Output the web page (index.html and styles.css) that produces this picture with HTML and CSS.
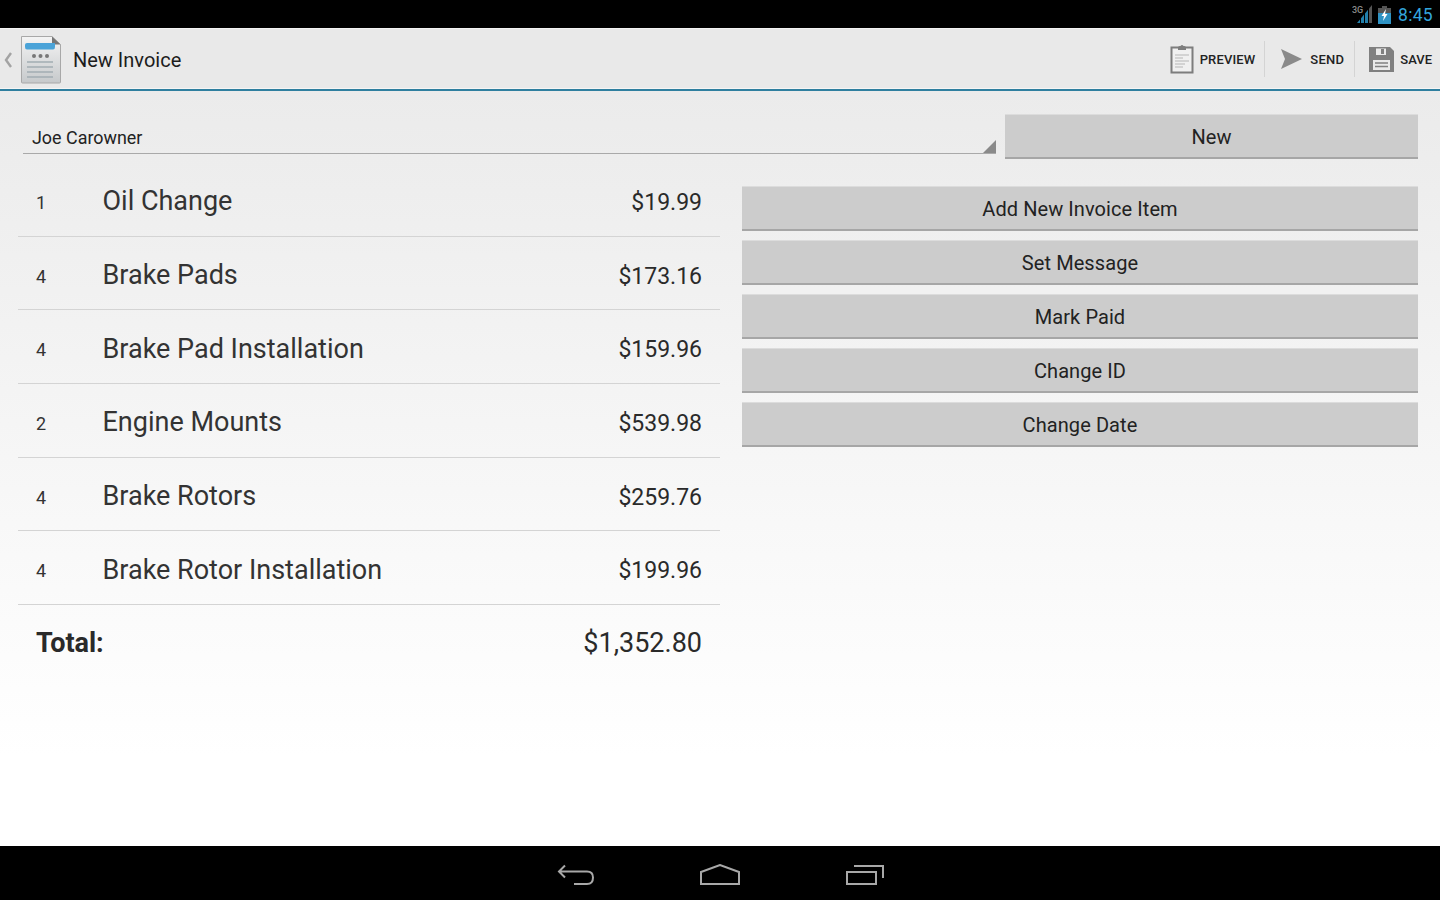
FILE: index.html
```html
<!DOCTYPE html>
<html lang="en">

<head>
  <meta charset="UTF-8">
  <title>New Invoice</title>
  <link rel="stylesheet" href="styles.css">
</head>

<body>

  <!-- Status bar -->
  <div class="statusbar">
    <svg class="status-signal" width="22" height="20" viewBox="0 0 22 20">
      <text x="0" y="9" class="status-3g">3G</text>
      <path d="M5 19 L8 15.400 V19 Z M9 19 V14.200 L12 10.600 V19 Z M13 19 V9.400 L16 5.800 V19 Z" fill="#2380ab"/>
      <path d="M17 19 V4.600 L20 1 V19 Z" fill="#555"/>
    </svg>
    <svg class="status-battery" width="13" height="18" viewBox="0 0 13 18">
      <rect x="4" y="0" width="5" height="2" fill="#555"/>
      <rect x="0" y="2" width="13" height="5" fill="#555"/>
      <rect x="0" y="7" width="13" height="11" fill="#2f93c4"/>
      <path d="M8 3 L3.500 10 H6 L5 15 L9.500 8 H7 Z" fill="#fff"/>
    </svg>
    <span class="clock">8:45</span>
  </div>

  <!-- Action bar -->
  <div class="actionbar">
    <svg class="back-caret" width="8" height="16" viewBox="0 0 8 16">
      <path d="M7 1 L2 8 L7 15" fill="none" stroke="#a3a3a3" stroke-width="2.400"/>
    </svg>
    <svg class="app-icon" width="42" height="48" viewBox="0 0 42 48">
      <defs>
        <linearGradient id="sheet" x1="0" y1="0" x2="0" y2="1">
          <stop offset="0" stop-color="#f4f4f4"/>
          <stop offset="1" stop-color="#c6c9cb"/>
        </linearGradient>
      </defs>
      <path d="M1.500 0.500 H32 L40.500 8.500 V46 Q40.500 47 39.500 47 H2.500 Q1.500 47 1.500 46 Z" fill="url(#sheet)" stroke="#a8a8a8"/>
      <path d="M32 0.500 L40.500 8.500 H32 Z" fill="#777"/>
      <path d="M5 9 Q5 7 7 7 H35 V11 Q35 13.500 33 13.500 H7 Q5 13.500 5 11 Z" fill="#4aa3d8"/>
      <rect x="12" y="18" width="4" height="4" rx="2" fill="#777"/>
      <rect x="18.500" y="18" width="4" height="4" rx="2" fill="#777"/>
      <rect x="25" y="18" width="4" height="4" rx="2" fill="#777"/>
      <path d="M7 26 H33 M7 31 H33 M7 36 H33 M7 41 H33" stroke="#a3adb3" stroke-width="1.500"/>
    </svg>
    <span class="title">New Invoice</span>
    <div class="actions">
      <a class="action action-preview">
        <svg width="24" height="30" viewBox="0 0 24 30">
          <rect x="1.500" y="3.500" width="21" height="25" fill="#f0f0f0" stroke="#7d7d7d" stroke-width="2"/>
          <path d="M8 4 Q8 2 10 2 H10.500 Q12 0 13.500 2 H14 Q16 2 16 4 V6 H8 Z" fill="#7d7d7d"/>
          <path d="M5 11 H19 M5 14 H13 M5 17 H19 M5 20 H15 M5 23 H13" stroke="#b5b5b5" stroke-width="1.200"/>
        </svg>
        <span>PREVIEW</span>
      </a>
      <a class="action action-send">
        <svg width="21" height="22" viewBox="0 0 21 22">
          <path d="M0 1 L21 11 L0 21 L4 11 Z" fill="#8a8a8a"/>
        </svg>
        <span>SEND</span>
      </a>
      <a class="action action-save">
        <svg width="25" height="25" viewBox="0 0 25 25">
          <path fill-rule="evenodd" fill="#808080" d="M0 0 H21 L25 4 V25 H0 Z M7 1.500 V8 H17 V1.500 Z M4 13 V23 H21 V13 Z"/>
          <rect x="12" y="2" width="3" height="5" fill="#808080"/>
          <path d="M6 16 H19 M6 19.500 H19" stroke="#808080" stroke-width="1.600"/>
        </svg>
        <span>SAVE</span>
      </a>
    </div>
  </div>

  <!-- Content -->
  <div class="content">
    <div class="customer-row">
      <div class="spinner">Joe Carowner</div>
      <button class="btn btn-new">New</button>
    </div>

    <div class="columns">
      <div class="invoice">
        <div class="item">
          <span class="qty">1</span>
          <span class="name">Oil Change</span>
          <span class="price">$19.99</span>
        </div>
        <div class="item">
          <span class="qty">4</span>
          <span class="name">Brake Pads</span>
          <span class="price">$173.16</span>
        </div>
        <div class="item">
          <span class="qty">4</span>
          <span class="name">Brake Pad Installation</span>
          <span class="price">$159.96</span>
        </div>
        <div class="item">
          <span class="qty">2</span>
          <span class="name">Engine Mounts</span>
          <span class="price">$539.98</span>
        </div>
        <div class="item">
          <span class="qty">4</span>
          <span class="name">Brake Rotors</span>
          <span class="price">$259.76</span>
        </div>
        <div class="item">
          <span class="qty">4</span>
          <span class="name">Brake Rotor Installation</span>
          <span class="price">$199.96</span>
        </div>
        <div class="total">
          <span class="total-label">Total:</span>
          <span class="total-value">$1,352.80</span>
        </div>
      </div>

      <div class="buttons">
        <button class="btn">Add New Invoice Item</button>
        <button class="btn">Set Message</button>
        <button class="btn">Mark Paid</button>
        <button class="btn">Change ID</button>
        <button class="btn">Change Date</button>
      </div>
    </div>
  </div>

  <!-- Navigation bar -->
  <div class="navbar">
    <svg width="38" height="22" viewBox="0 0 38 22">
      <path d="M8 1.500 L2 7.500 L8 13.500 M2 7.500 H30 Q36 7.500 36 13.500 Q36 20 30 20 H17" fill="none" stroke="#a8a8a8" stroke-width="2"/>
    </svg>
    <svg width="42" height="22" viewBox="0 0 42 22">
      <path d="M2 20 V8 L21 1 L40 8 V20 Z" fill="none" stroke="#a8a8a8" stroke-width="2"/>
    </svg>
    <svg width="40" height="22" viewBox="0 0 40 22">
      <rect x="2" y="8" width="29" height="12" fill="none" stroke="#a8a8a8" stroke-width="2"/>
      <path d="M9 2 H38 V14" fill="none" stroke="#a8a8a8" stroke-width="2"/>
    </svg>
  </div>

</body>

</html>
```

FILE: styles.css
```css
html,
body {
  height: 100%;
}

body {
  font-family: Roboto, "Liberation Sans", sans-serif;
  color: #222;
  margin: 0;
  display: flex;
  flex-direction: column;
  height: 900px;
  overflow: hidden;
  background: #fff;
}

/* Status bar */
.statusbar {
  height: 28px;
  background: #000;
  display: flex;
  align-items: center;
  justify-content: flex-end;
  padding-right: 7px;
  box-sizing: border-box;
}

.status-signal {
  margin-right: 4px;
}

.status-3g {
  font-size: 9px;
  font-weight: 500;
  fill: #8a8a8a;
}

.status-battery {
  margin-right: 7px;
  margin-top: 1px;
}

.clock {
  color: #33a5dc;
  font-size: 17.500px;
  letter-spacing: 0.3px;
  padding-top: 2px;
}

/* Action bar */
.actionbar {
  height: 63px;
  box-sizing: border-box;
  background: #e9e9e9;
  border-top: 1px solid #f4f4f4;
  border-bottom: 2px solid #2f7f9f;
  box-shadow: inset 0 -1px 0 #f5f5f5;
  display: flex;
  align-items: center;
  padding-left: 4px;
}

.back-caret {
  margin: 2px 8px 0 0;
}

.app-icon {
  margin: 2px 11px 0 0;
}

.title {
  font-size: 20px;
  color: #1c1c1c;
  padding-top: 2px;
}

.actions {
  margin-left: auto;
  display: flex;
  align-items: center;
}

.action {
  display: flex;
  align-items: center;
  height: 36px;
  font-size: 13px;
  font-weight: 500;
  color: #222;
  border-left: 1px solid #d4d4d4;
}

.action-preview {
  border-left: none;
  padding: 0 9px 0 0;
  letter-spacing: 0.14px;
}

.action-preview svg {
  margin-right: 6px;
}

.action-send {
  padding: 0 10px 0 16px;
  letter-spacing: 0.25px;
}

.action-send svg {
  margin-right: 8px;
}

.action-save {
  padding: 0 8px 0 14px;
}

.action-save svg {
  margin-right: 6px;
}

/* Content */
.content {
  flex: 1;
  background: linear-gradient(#ebebeb, #ffffff 88%);
  padding: 23px 22px 0 18px;
}

.customer-row {
  display: flex;
  align-items: flex-start;
  gap: 9px;
  height: 49px;
}

.spinner {
  flex: 1;
  position: relative;
  margin: 1px 0 0 5px;
  height: 39px;
  box-sizing: border-box;
  border-bottom: 1px solid #a9a9a9;
  padding: 12px 0 0 9px;
  font-size: 17.900px;
  color: #222;
}

.spinner::after {
  content: "";
  position: absolute;
  right: 0;
  bottom: 0;
  border-style: solid;
  border-width: 0 0 13px 13px;
  border-color: transparent transparent #8a8a8a transparent;
}

.btn {
  display: block;
  width: 100%;
  height: 45px;
  padding: 2px 0 0;
  border: none;
  border-top: 1px solid #dcdcdc;
  border-bottom: 2px solid #a6a6a6;
  background: #cccccc;
  color: #222;
  font-family: Roboto, "Liberation Sans", sans-serif;
  font-size: 20px;
  letter-spacing: 0.08px;
}

.btn-new {
  width: 413px;
  flex-shrink: 0;
}

.columns {
  display: flex;
  gap: 22px;
}

/* Invoice list */
.invoice {
  width: 702px;
  flex-shrink: 0;
}

.item {
  display: flex;
  align-items: center;
  height: 73.700px;
  box-sizing: border-box;
  border-bottom: 1px solid #d4d4d4;
  padding: 0 18px;
}

.qty {
  width: 66.500px;
  font-size: 18px;
  padding-top: 6px;
  color: #333;
}

.name {
  flex: 1;
  font-size: 27px;
  color: #333;
  padding-top: 4px;
}

.price {
  font-size: 23px;
  padding-top: 6px;
  color: #2a2a2a;
}

.total {
  display: flex;
  justify-content: space-between;
  padding: 22px 18px 0;
}

.total-label {
  font-size: 27px;
  font-weight: 700;
  color: #2a2a2a;
  letter-spacing: -0.1px;
}

.total-value {
  font-size: 27px;
  color: #2a2a2a;
}

/* Right column */
.buttons {
  flex: 1;
  display: flex;
  flex-direction: column;
  gap: 9px;
  padding-top: 23px;
}

/* Navigation bar */
.navbar {
  height: 54px;
  flex-shrink: 0;
  background: #000;
  display: flex;
  align-items: center;
  justify-content: center;
  gap: 104px;
  padding: 3px 0 0 2px;
  box-sizing: border-box;
}
```
